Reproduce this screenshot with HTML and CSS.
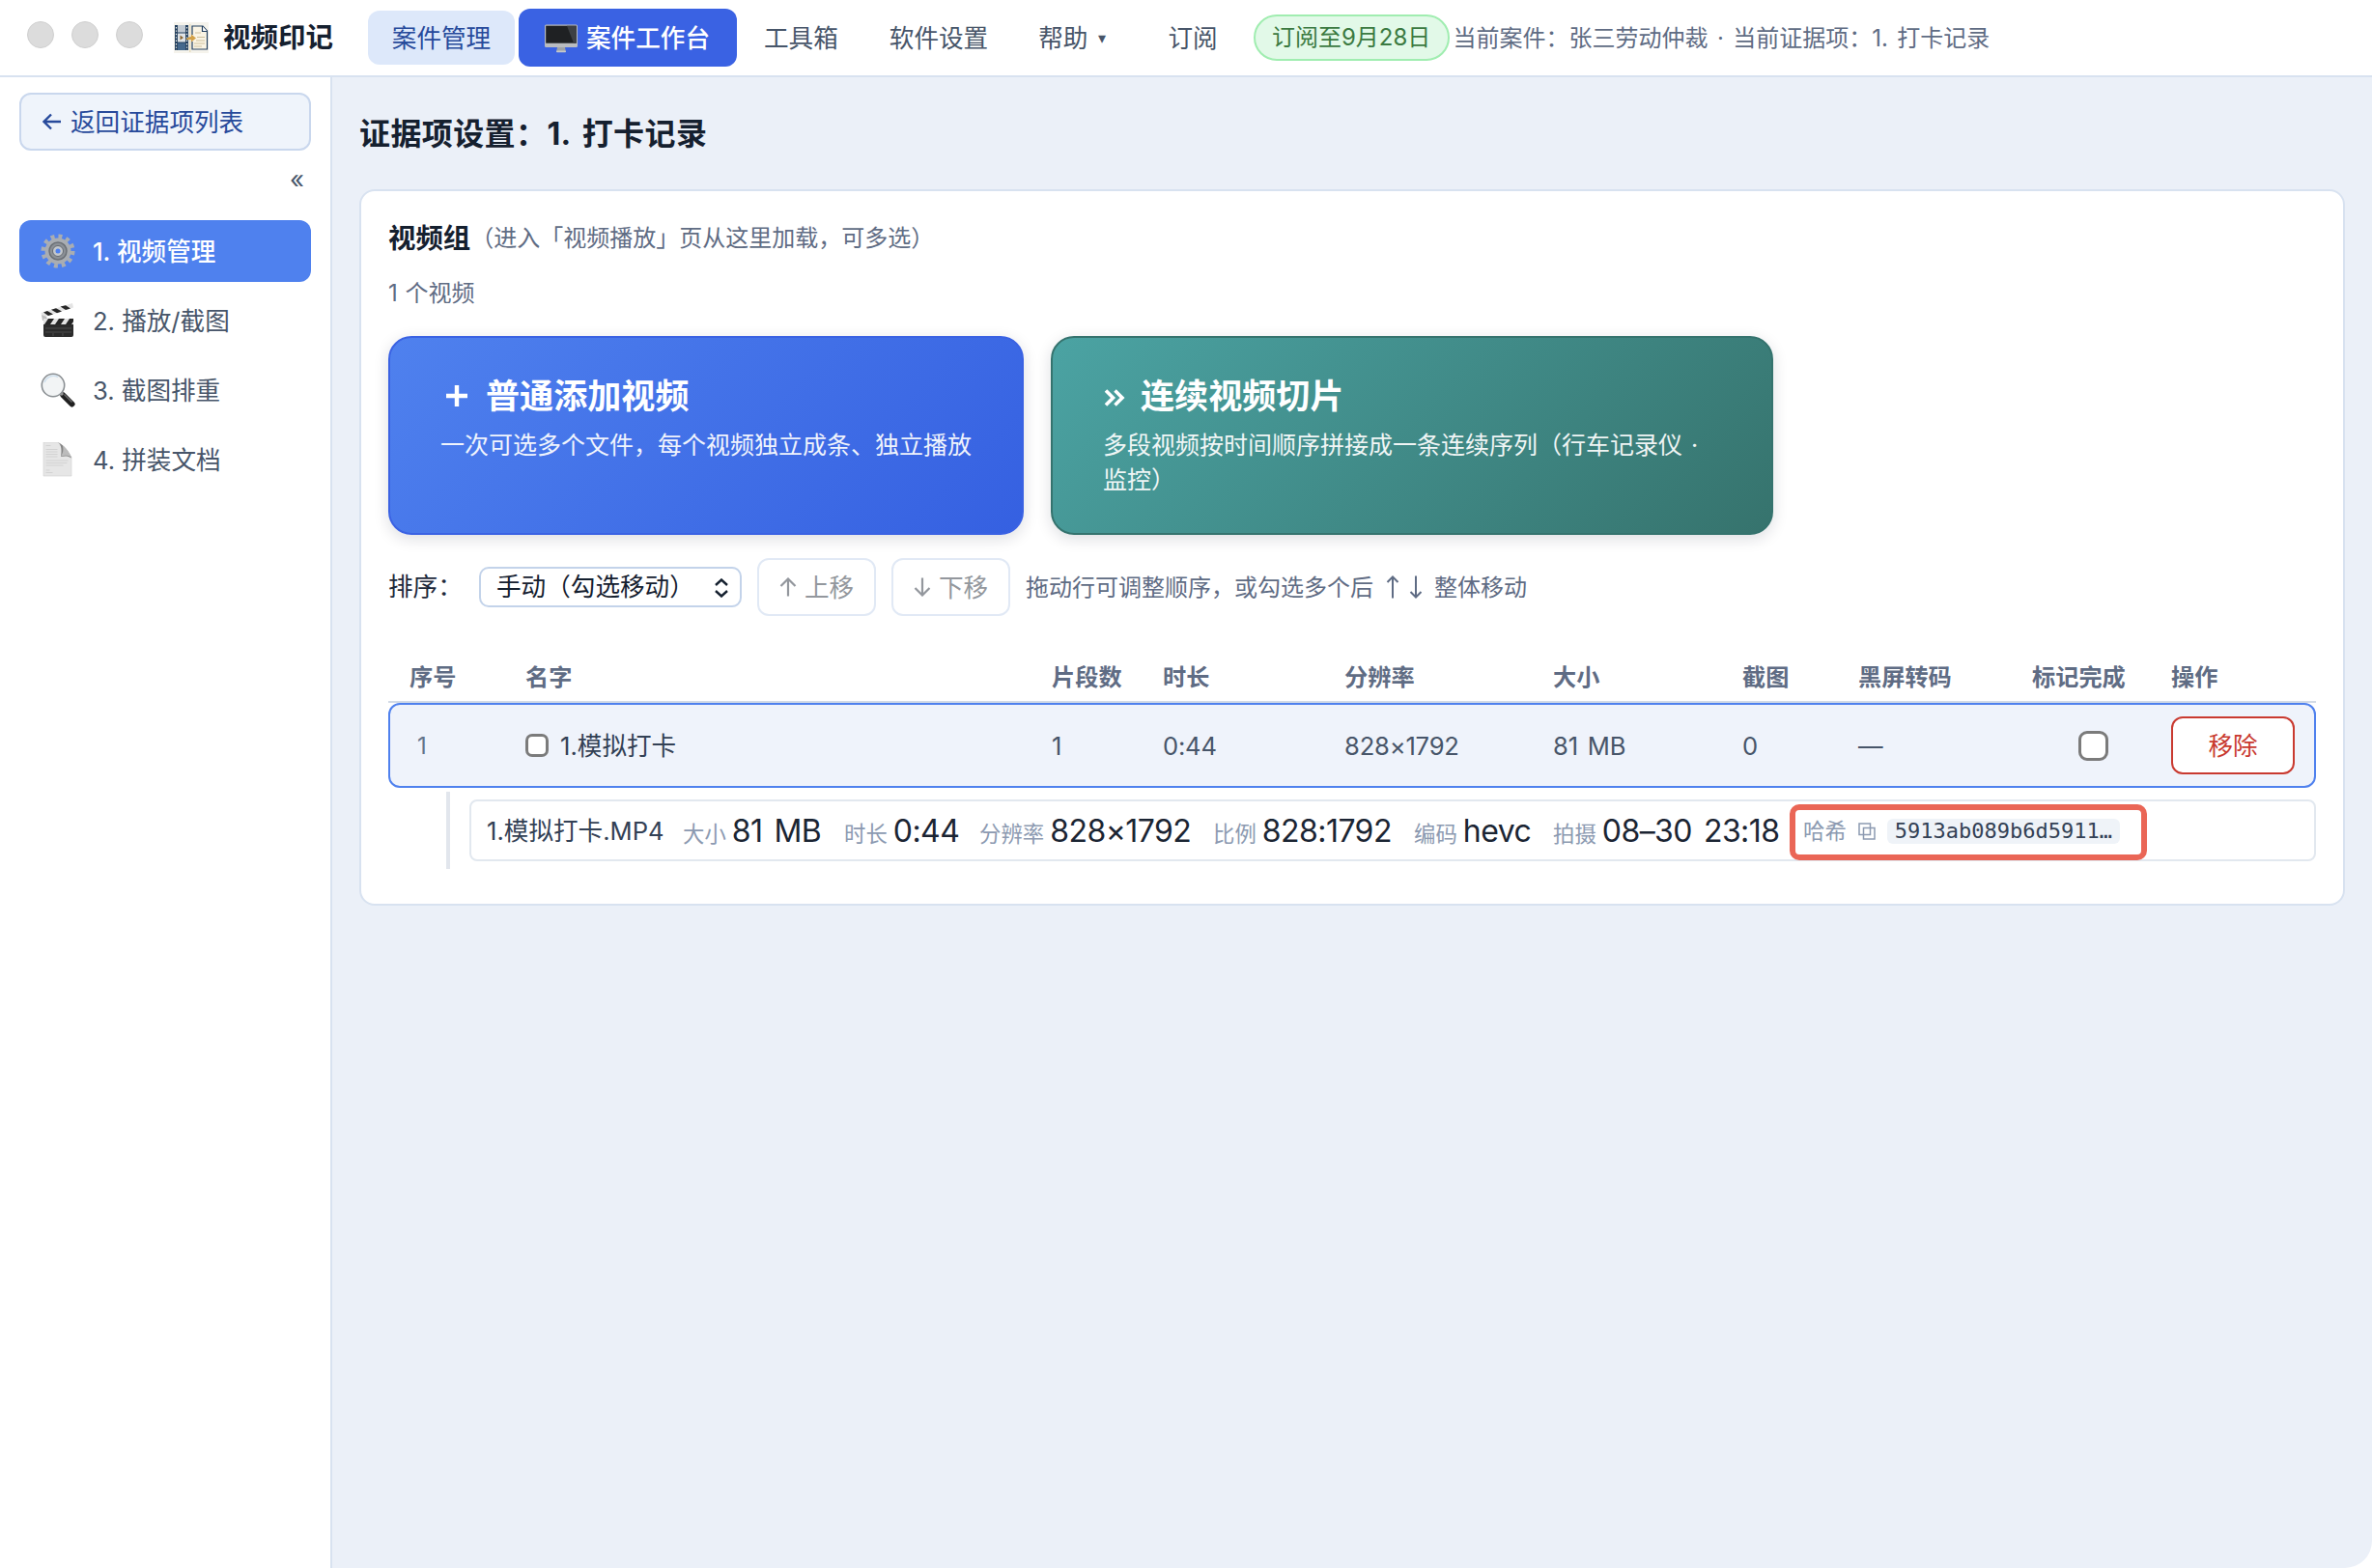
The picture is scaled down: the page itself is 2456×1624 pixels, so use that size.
FILE: index.html
```html
<!DOCTYPE html>
<html lang="zh-CN">
<head>
<meta charset="utf-8" />
<title>视频印记</title>
<link rel="stylesheet" href="styles.css">
</head>
<body>
<div class="app">
  <header class="topbar">
    <div class="lights"><i></i><i></i><i></i></div>
    <svg class="logo" viewBox="0 0 36 32">
      <rect width="36" height="32" fill="#f5f3ec"/>
      <rect x="1" y="3" width="14" height="26" fill="#dfe3e6"/>
      <rect x="4" y="3" width="8" height="8" fill="#c3cbd3"/>
      <rect x="4" y="21" width="8" height="8" fill="#45688c"/>
      <path d="M2.500 3v26M13.500 3v26" stroke="#24405f" stroke-width="3"/>
      <path d="M2.500 5v24M13.500 5v24" stroke="#f5f3ec" stroke-width="1.200" stroke-dasharray="1.400 2"/>
      <path d="M4 11h8M4 21h8" stroke="#24405f"/>
      <path d="M16.800 2v29" stroke="#d8c79a" stroke-width=".8"/>
      <path d="M19 13V4h11l4.500 5v19H19v-8" fill="#faf4e4" stroke="#24405f" stroke-width="1.200"/>
      <path d="M29.500 4v5.500h5" fill="#fff" stroke="#24405f" stroke-width="1.200"/>
      <path d="M22 11h6M24 15.500h8M23 19h9M21 22h11M21 25h8" stroke="#cdbf9b" stroke-width="1.100"/>
      <path d="M6.500 13.500l3.500 2.500-3.500 2.500z" fill="#8a6530"/>
      <path d="M12 17.500c2-1 3-2.500 6-2.500v-2.500l5 4-5 4v-2.500c-3 0-4 .5-6-.5z" fill="#d3a148"/>
    </svg>
    <div class="brand">视频印记</div>
    <nav class="menu">
      <a class="case">案件管理</a>
      <a class="active">
        <svg class="monitor" viewBox="0 0 36 30">
          <rect x="1" y="0.500" width="34" height="23.500" rx="1.500" fill="#b9bcc0"/>
          <rect x="2.200" y="1.700" width="31.600" height="18" fill="#1f2123"/>
          <path d="M33.800 1.700H24l7 18h2.800z" fill="#3d4044"/>
          <path d="M14 24h8l.8 4H13.200z" fill="#9fa3a7"/>
          <rect x="13" y="27.500" width="10" height="1.800" rx=".8" fill="#c6c9cc"/>
        </svg>案件工作台</a>
      <a class="tools">工具箱</a>
      <a class="settings">软件设置</a>
      <a class="help">帮助 <small>▾</small></a>
      <a class="sub">订阅</a>
    </nav>
    <span class="pill">订阅至9月28日</span>
    <span class="current">当前案件：张三劳动仲裁 · 当前证据项：1. 打卡记录</span>
  </header>

  <div class="body">
    <aside class="sidebar">
      <button class="back"><svg viewBox="0 0 20 18"><path d="M19 9H2M9 1.500L1.500 9 9 16.500"/></svg>返回证据项列表</button>
      <div class="collapse">«</div>
      <nav class="steps">
        <a class="step on">
          <svg viewBox="0 0 36 36">
            <circle cx="18" cy="18" r="15" fill="none" stroke="#a9adb2" stroke-width="5" stroke-dasharray="3.900 3.954"/>
            <circle cx="18" cy="18" r="13.500" fill="#a9adb2"/>
            <circle cx="18" cy="18" r="9" fill="#8b9096" stroke="#6b7076" stroke-width="1.500"/>
            <circle cx="18" cy="18" r="5.500" fill="#c3c7cb" stroke="#666b71"/>
            <circle cx="18" cy="18" r="2.500" fill="#4f81ee"/>
          </svg>1. 视频管理</a>
        <a class="step">
          <svg viewBox="0 0 36 36">
            <path d="M.5 10L33 0l1 4.500L2 15z" fill="#e4e4e4"/>
            <path d="M7 8l6 3.500-5 1.500-5-3.500zM16 5.200l6 3.300-5 1.700-6-3.500zM26 2.200l5 3.200-5 1.700-5.500-3.500z" fill="#262626"/>
            <path d="M1 12l5 2 2 4H2z" fill="#bdbdbd"/>
            <rect x="3" y="16" width="31" height="6" fill="#e4e4e4"/>
            <path d="M8 16h6l-4 6H4zM19 16h6l-4 6h-6zM30 16h4v3l-2 3h-6z" fill="#262626"/>
            <path d="M3 22h31v11a2 2 0 0 1-2 2H5a2 2 0 0 1-2-2z" fill="#2b2b2b"/>
            <path d="M5 26h27M5 30h27M13 31v3M23 31v3" stroke="#575757" stroke-width=".8"/>
          </svg>2. 播放/截图</a>
        <a class="step">
          <svg viewBox="0 0 36 36">
            <path d="M23.500 23.500l9 9" stroke="#202020" stroke-width="6" stroke-linecap="round"/>
            <path d="M24.500 22.500l8 8" stroke="#6b6b6b" stroke-width="1.500"/>
            <path d="M20 20l3 3" stroke="#999" stroke-width="3"/>
            <circle cx="13" cy="13" r="11.700" fill="#f2f4f5" stroke="#8a8f93" stroke-width="1.600"/>
            <path d="M4 10a10 10 0 0 1 14-5.500" fill="none" stroke="#cfe0ee" stroke-width="1.500"/>
          </svg>3. 截图排重</a>
        <a class="step">
          <svg viewBox="0 0 36 36">
            <path d="M3 0h15l14 15v20H3z" fill="#e6e6e6" stroke="#d2d2d2" stroke-width=".6"/>
            <path d="M18 0c4 3 4 9 3 15 4-1 8-1 11 1.500C29 9 24 3 18 0z" fill="#858585"/>
            <path d="M21 14.500c2-3 3-6 2-11 4 3 7 7 9 12-3-2-7-2-11-1z" fill="#bcbcbc"/>
            <path d="M5.500 3.500h5M5.500 7.500h12M5.500 10h12M5.500 12.500h12M5.500 15h12M5.500 19h23M5.500 21.500h22M5.500 24h18M5.500 29h4M5.500 31.500h7" stroke="#cdcdcd" stroke-width=".8"/>
          </svg>4. 拼装文档</a>
      </nav>
    </aside>

    <main class="main">
      <h1>证据项设置：1. 打卡记录</h1>
      <section class="card">
        <div class="group"><b>视频组</b><span>（进入「视频播放」页从这里加载，可多选）</span></div>
        <div class="count">1 个视频</div>
        <div class="adders">
          <div class="adder blue">
            <div class="adder-title"><svg viewBox="0 0 24 24"><path d="M12 1v22M1 12h22"/></svg>普通添加视频</div>
            <p>一次可选多个文件，每个视频独立成条、独立播放</p>
          </div>
          <div class="adder green">
            <div class="adder-title"><svg class="chev" viewBox="0 0 22 18"><path d="M2 1.500L9.500 9 2 16.500M11.500 1.500L19 9l-7.500 7.500"/></svg>连续视频切片</div>
            <p>多段视频按时间顺序拼接成一条连续序列（行车记录仪 · 监控）</p>
          </div>
        </div>

        <div class="sort">
          <span class="sort-label">排序：</span>
          <div class="select">手动（勾选移动）<svg viewBox="0 0 16 20"><path d="M2 7l6-5.500L14 7M2 13l6 5.500 6-5.500"/></svg></div>
          <button class="move"><svg viewBox="0 0 18 20"><path d="M9 19.500V2M1.500 9L9 1.500 16.500 9"/></svg>上移</button>
          <button class="move"><svg viewBox="0 0 18 20"><path d="M9 .5V18M1.500 11L9 18.500l7.500-7.500"/></svg>下移</button>
          <span class="hint">拖动行可调整顺序，或勾选多个后 <svg viewBox="0 0 42 24"><path d="M9 23.500V1.500M3.500 7L9 1.500 14.500 7M33 .5v22M27.500 17l5.500 5.500 5.500-5.500"/></svg> 整体移动</span>
        </div>

        <div class="grid head">
          <span>序号</span><span>名字</span><span>片段数</span><span>时长</span><span>分辨率</span><span>大小</span><span>截图</span><span>黑屏转码</span><span>标记完成</span><span>操作</span>
        </div>
        <div class="grid row">
          <span class="no">1</span>
          <span class="name"><i class="check"></i>1.模拟打卡</span>
          <span>1</span><span>0:44</span><span>828×1792</span><span>81 MB</span><span>0</span><span>—</span>
          <span class="done"><i class="check big"></i></span>
          <span><button class="remove">移除</button></span>
        </div>
        <div class="clips">
          <div class="clip">
            <span class="file">1.模拟打卡.MP4</span>
            <span class="meta m1"><em>大小</em>81 MB</span>
            <span class="meta m2"><em>时长</em>0:44</span>
            <span class="meta m3"><em>分辨率</em>828×1792</span>
            <span class="meta m4"><em>比例</em>828:1792</span>
            <span class="meta m5"><em>编码</em>hevc</span>
            <span class="meta m6"><em>拍摄</em>08–30 23:18</span>
            <span class="hash"><em>哈希</em><svg viewBox="0 0 18 18"><path d="M1 1h11.500v11.500H1zM5.500 5.500H17V17H5.500z"/></svg><code>5913ab089b6d5911…</code></span>
          </div>
        </div>
      </section>
    </main>
  </div>
</div>
</body>
</html>
```
FILE: styles.css
```css
* { box-sizing:border-box; }
body {
  margin:0; background:#fff; color:#1e293b;
  font-family: Inter, "Noto Sans CJK SC", sans-serif; font-size:25.6px; line-height:1.2;
}
button { font:inherit; margin:0; }
i, em { font-style:normal; }
svg { flex:none; fill:none; }
.app {
  height:1624px; display:flex; flex-direction:column; overflow:hidden;
  border-radius:0 0 28px 0;
}

/* top bar */
.topbar {
  height:80px; flex:none; display:flex; align-items:center;
  background:#fff; border-bottom:2px solid #d8e2f0; white-space:nowrap;
}
.lights { display:flex; gap:18px; margin:-6px 0 0 28px; }
.lights i { width:28px; height:28px; border-radius:50%; background:#dcdcdc; border:1px solid #d0d0d0; }
.logo { width:36px; height:32px; margin-left:32px; }
.brand { width:150px; margin-left:15px; padding-top:1px; font-size:28.500px; font-weight:700; color:#15202f; }
.menu { display:flex; align-items:center; color:#475569; }
.menu a { height:56px; padding-top:2px; display:flex; align-items:center; }
.menu .case { width:152px; justify-content:center; border-radius:12px; background:#dde8fa; color:#274a9b; }
.menu .active {
  width:226px; height:60px; margin-left:4px; padding-left:26px;
  border-radius:12px; background:#3a62e3; color:#fff; font-weight:500;
}
.monitor { width:36px; height:30px; margin-right:8px; }
.tools { margin-left:28px; }
.settings { margin-left:53px; }
.help { margin-left:52px; }
.help small { font-size:16px; margin-left:11px; }
.sub { margin-left:64px; }
.pill {
  width:203px; height:48px; margin-left:37px; display:flex; align-items:center; justify-content:center;
  border:2px solid #a0edb0; border-radius:24px; background:#e2f9e8; color:#3b7a41; font-size:24px;
}
.current { margin-left:4px; padding-top:2px; font-size:24px; word-spacing:2.600px; color:#5f6c84; }

/* sidebar */
.body { flex:1; display:flex; min-height:0; }
.sidebar { width:344px; flex:none; padding:16px 20px; border-right:2px solid #d8e2f0; background:#fff; }
.back {
  width:302px; height:60px; padding:3px 0 0 22px; display:flex; align-items:center; gap:9px;
  border:2px solid #c9d7ed; border-radius:12px; background:#eff4fb; color:#274a9b;
}
.back svg { width:20px; height:18px; margin-top:-3px; stroke:#274a9b; stroke-width:2.4; }
.collapse { height:72px; padding:15px 7px 0 0; text-align:right; color:#475569; }
.steps { display:flex; flex-direction:column; gap:8px; }
.step {
  width:302px; height:64px; padding:3px 0 0 22px; display:flex; align-items:center; gap:18px;
  border-radius:12px; color:#475569;
}
.step svg { width:36px; height:36px; margin-top:-3px; }
.step.on { background:#4f81ee; color:#fff; font-weight:500; }

/* content */
.main { flex:1; padding:0 28px; background:#ebf0f8; }
h1 {
  height:116px; margin:0; padding-top:3px; display:flex; align-items:center;
  font-size:32px; font-weight:700; letter-spacing:.4px; word-spacing:4px; color:#15202f;
}
.card { height:742px; padding:0 28px; background:#fff; border:2px solid #d8e2f0; border-radius:16px; }
.group { height:58px; margin-top:20px; display:flex; align-items:center; }
.group b { font-size:28.400px; color:#15202f; }
.group span { padding-top:1px; font-size:24px; color:#5f6c84; }
.count { height:54px; padding-top:2px; display:flex; align-items:center; font-size:24px; word-spacing:1px; color:#5f6c84; }
.adders { display:flex; gap:28px; margin-top:18px; }
.adder { height:206px; padding:37px 52px 0; border-radius:24px; color:#fff; box-shadow:0 4px 16px rgba(15,23,42,.14); }
.blue { width:658px; border:2px solid #3a62e3; background:linear-gradient(135deg,#4f81ee,#3560e1); }
.green { width:748px; border:2px solid #35736e; background:linear-gradient(135deg,#4ba3a3,#36736d); }
.adder-title { height:46px; display:flex; align-items:center; font-size:35.1px; font-weight:700; }
.adder-title svg { width:24px; height:24px; margin:0 18px 0 5px; stroke:#fff; stroke-width:4.400; }
.adder-title .chev { width:22px; height:18px; margin:4px 16px 0 1px; stroke-width:3.600; }
.adder p { margin:10px 0 0; font-size:25px; line-height:36px; opacity:.92; white-space:nowrap; }
.green p { white-space:normal; word-spacing:2px; }

.sort { height:60px; margin-top:24px; display:flex; align-items:center; white-space:nowrap; }
.sort-label { width:94px; padding-top:1px; }
.select {
  width:272px; height:42px; padding:1px 0 0 16px; display:flex; align-items:center;
  border:2px solid #c3d3ea; border-radius:10px; color:#15202f;
}
.select svg { width:16px; height:20px; margin-left:20px; stroke:#15202f; stroke-width:2.4; }
.move {
  width:123px; height:60px; margin-left:16px; padding:2px 0 0; display:flex; align-items:center; justify-content:center; gap:8px;
  border:2px solid #e1e9f5; border-radius:12px; background:#fff; color:#93979d;
}
.move svg { width:18px; height:20px; margin-top:-2px; stroke:#93979d; stroke-width:2.2; }
.hint { margin-left:16px; padding-top:2px; display:flex; align-items:center; gap:10.500px; font-size:24px; color:#5f6c84; }
.hint svg { width:42px; height:24px; margin-top:-2px; stroke:#5f6c84; stroke-width:2; }

/* table */
.grid {
  display:grid; align-items:center; padding-left:22px; white-space:nowrap;
  grid-template-columns:120px 545px 115px 188px 216px 196px 120px 180px 144px 1fr;
}
.head { height:52px; margin-top:38px; padding-top:2px; border-bottom:2px solid #d3dbe6; font-size:24.200px; font-weight:700; color:#5f6c84; }
.row {
  height:88px; padding-left:20px; border:2px solid #4f81ee; border-radius:12px;
  background:#eff3fb; color:#475569; letter-spacing:-.2px; word-spacing:3px;
}
.row > span { padding-top:2px; }
.row .no { padding-left:8px; font-size:24px; color:#64748b; }
.name { display:flex; align-items:center; gap:12px; color:#334155; letter-spacing:0; }
.check { width:24px; height:24px; margin-top:-2px; border:3px solid #7b7b7b; border-radius:7px; background:#fff; }
.row .done { display:flex; padding-left:48px; }
.check.big { width:31px; height:31px; border-radius:9px; }
.remove { width:128px; height:60px; margin-top:-2px; padding:2px 0 0; border:2px solid #c93a30; border-radius:12px; background:#fff; color:#c93a30; vertical-align:middle; letter-spacing:0; }
.clips { height:80px; margin:4px 0 0 60px; padding:8px 0 8px 20px; border-left:4px solid #e2e6ed; }
.clip {
  height:64px; padding:2px 0 0 16px; display:flex; align-items:center; position:relative;
  border:2px solid #e2e8ef; border-radius:8px; white-space:nowrap;
}
.file { width:203px; color:#334155; }
.meta { font-size:32px; letter-spacing:-.55px; word-spacing:3.500px; color:#1b2533; }
.meta em { margin-right:6px; font-size:22.400px; letter-spacing:0; color:#8c9ab1; }
.m1 { width:167px; }
.m2 { width:140px; }
.m3 { width:242px; }
.m4 { width:208px; }
.m5 { width:144px; }
/* highlight frame around the hash */
.hash {
  position:absolute; left:1365px; top:3px; width:370px; height:58px; padding:0 0 2px 8px;
  display:flex; align-items:center; border:6px solid #ea6656; border-radius:10px;
}
.hash em { font-size:22.400px; color:#8c9ab1; }
.hash svg { width:18px; height:18px; margin:0 12px 0 12px; stroke:#8c9ab1; stroke-width:1.500; }
.hash code {
  padding:0 8px; border-radius:6px; background:#eff3f8; color:#334155;
  font-family:"DejaVu Sans Mono", monospace; font-size:22px; line-height:26px;
}
```
